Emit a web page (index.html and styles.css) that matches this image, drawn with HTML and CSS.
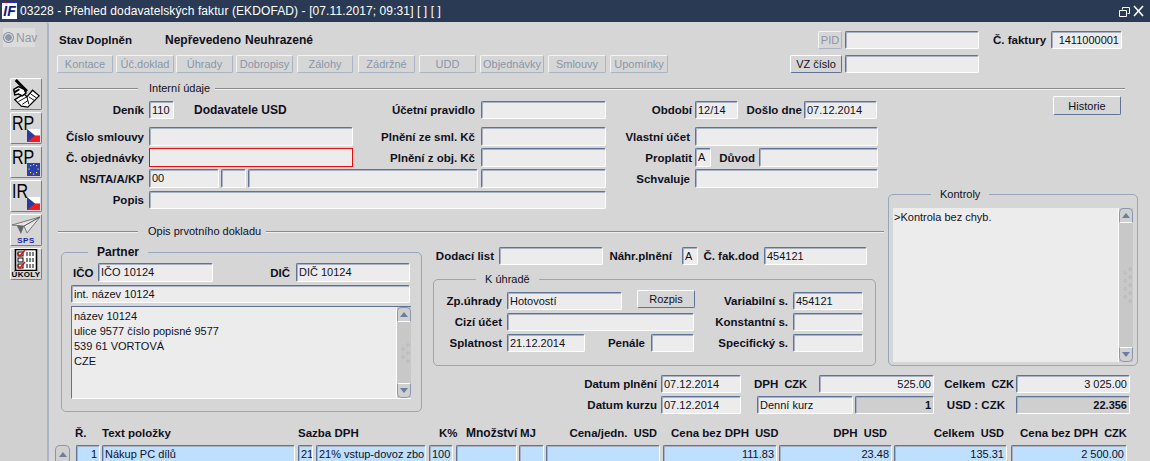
FILE: index.html
```html
<!DOCTYPE html>
<html lang="cs">
<head>
<meta charset="utf-8">
<title>Přehled dodavatelských faktur</title>
<link rel="stylesheet" href="styles.css">
</head>
<body>
<div class="app">
  <header class="titlebar">
    <span class="logo"><span class="logo-i">I</span><span class="logo-f">F</span></span>
    <span class="title">03228 - Přehled dodavatelských faktur (EKDOFAD) - [07.11.2017; 09:31] [ ] [ ]</span>
    <svg class="winctl" width="28" height="14" viewBox="0 0 28 14" fill="none" stroke="#fff">
      <path d="M4.5 3.5h7v6h-2M4.5 3.5v2M1.5 6.5h7v6h-7z"/>
      <path d="M16 2l9 10M25 2l-9 10" stroke-width="1.6"/>
    </svg>
  </header>
  <div class="main">
    <aside class="rail">
      <div class="nav"><span class="radio"></span><span>Nav</span></div>
      <div class="tools">
        <div class="tool">
          <svg viewBox="0 0 32 32" width="30" height="30">
            <path d="M4 22l10-6 3 3 6-7 7 6-12 12-7-1z" fill="#fff" stroke="#000" stroke-width="1.4"/>
            <path d="M8 24l9-5 2 8M12 27l6-4M21 16l6 4M19 19l6 4" fill="none" stroke="#000"/>
            <path d="M5 1l12 12" stroke="#000" stroke-width="3"/>
            <path d="M3 11l5-3 6 3 2 4-4 3-4-2-4 1z" fill="#fff" stroke="#000" stroke-width="1.6"/>
            <path d="M4 14l5-3" stroke="#000" stroke-width="2"/>
          </svg>
        </div>
        <div class="tool">
          <span class="tool-text">RP</span>
          <svg class="flag" viewBox="0 0 13 13" width="13" height="13"><rect width="13" height="6.5" fill="#fff"/><rect y="6.5" width="13" height="6.5" fill="#ee1c25"/><path d="M0 0l8 6.5L0 13z" fill="#2b3a9c"/></svg>
        </div>
        <div class="tool">
          <span class="tool-text">RP</span>
          <svg class="flag" viewBox="0 0 13 13" width="13" height="13"><rect width="13" height="13" fill="#2a3fb0"/><g fill="#ffe000"><rect x="6" y="1" width="1.2" height="1.2"/><rect x="9" y="2" width="1.2" height="1.2"/><rect x="10.5" y="5.5" width="1.2" height="1.2"/><rect x="9" y="9" width="1.2" height="1.2"/><rect x="6" y="10.5" width="1.2" height="1.2"/><rect x="3" y="9" width="1.2" height="1.2"/><rect x="1.5" y="5.5" width="1.2" height="1.2"/><rect x="3" y="2" width="1.2" height="1.2"/></g></svg>
        </div>
        <div class="tool">
          <span class="tool-text">IR</span>
          <svg class="flag" viewBox="0 0 13 13" width="13" height="13"><rect width="13" height="6.5" fill="#fff"/><rect y="6.5" width="13" height="6.5" fill="#ee1c25"/><path d="M0 0l8 6.5L0 13z" fill="#2b3a9c"/></svg>
        </div>
        <div class="tool">
          <svg class="plane" viewBox="0 0 30 20" width="30" height="20">
            <path d="M1 9l28-8-13 16-3-7z" fill="#e6e6e6" stroke="#777"/>
            <path d="M6 10l7 0-3 8z" fill="#666"/>
            <path d="M13 10L29 1" stroke="#555" fill="none"/>
          </svg>
          <span class="sps">SPS</span>
        </div>
        <div class="tool">
          <svg class="tasks" viewBox="0 0 26 22" width="26" height="22">
            <rect x="2.5" y="0.5" width="21" height="21" fill="#fff" stroke="#000" stroke-width="1.6"/>
            <g fill="#fff" stroke="#000"><rect x="5" y="3" width="5" height="4"/><rect x="5" y="9" width="5" height="4"/><rect x="5" y="15" width="5" height="4"/></g>
            <path d="M4 4l3 3 5-6M4 16l3 3 5-6" fill="none" stroke="#e01010" stroke-width="1.5"/>
            <path d="M13 4h8M13 6h8M13 10h8M13 12h8M13 16h8M13 18h8" stroke="#000" stroke-dasharray="2 1"/>
          </svg>
          <span class="ukoly">ÚKOLY</span>
        </div>
      </div>
    </aside>
    <main class="form">
      <div class="row h-18">
        <span class="lbl left ml-2 w-27">Stav</span>
        <span class="lbl left w-79">Doplněn</span>
        <span class="lbl left status w-80">Nepřevedeno</span>
        <span class="lbl left status w-573">Neuhrazené</span>
        <button class="btn off w-24">PID</button>
        <span class="field ml-3 w-134"></span>
        <span class="lbl ml-14 w-53">Č. faktury</span>
        <span class="field ml-5 w-71 end">1411000001</span>
      </div>
      <div class="row h-18 mt-6">
        <button class="btn off w-56">Kontace</button>
        <button class="btn off ml-3 w-58">Úč.doklad</button>
        <button class="btn off ml-2 w-57">Úhrady</button>
        <button class="btn off ml-3 w-57">Dobropisy</button>
        <button class="btn off ml-4 w-56">Zálohy</button>
        <button class="btn off ml-5 w-57">Zádržné</button>
        <button class="btn off ml-4 w-57">UDD</button>
        <button class="btn off ml-4 w-64">Objednávky</button>
        <button class="btn off ml-4 w-58">Smlouvy</button>
        <button class="btn off ml-4 w-58">Upomínky</button>
        <button class="btn ml-122 w-52">VZ číslo</button>
        <span class="field ml-3 w-134"></span>
      </div>
      <div class="sep sep-wide mt-8"><i class="sep-start"></i><span class="sep-text w-66">Interní údaje</span><i class="sep-rest"></i></div>

      <div class="mid">
        <section class="internal">
          <div class="row h-18">
            <span class="lbl w-87">Deník</span>
            <span class="field ml-5 w-25">110</span>
            <span class="lbl left status ml-20 w-100">Dodavatele USD</span>
            <span class="lbl w-181">Účetní pravidlo</span>
            <span class="field ml-6 w-125"></span>
            <span class="lbl w-86">Období</span>
            <span class="field ml-3 w-43">12/14</span>
            <span class="lbl w-64">Došlo dne</span>
            <span class="field ml-2 w-73">07.12.2014</span>
          </div>
          <div class="row h-19 mt-8">
            <span class="lbl w-87">Číslo smlouvy</span>
            <span class="field ml-5 w-204"></span>
            <span class="lbl w-122">Plnění ze sml. Kč</span>
            <span class="field ml-6 w-125"></span>
            <span class="lbl w-84">Vlastní účet</span>
            <span class="field ml-5 w-183"></span>
          </div>
          <div class="row h-19 mt-2">
            <span class="lbl w-87">Č. objednávky</span>
            <span class="field required ml-5 w-204"></span>
            <span class="lbl w-122">Plnění z obj. Kč</span>
            <span class="field ml-6 w-125"></span>
            <span class="lbl w-86">Proplatit</span>
            <span class="field ml-3 w-16">A</span>
            <span class="lbl w-44">Důvod</span>
            <span class="field ml-4 w-119"></span>
          </div>
          <div class="row h-19 mt-2">
            <span class="lbl w-87">NS/TA/A/KP</span>
            <span class="field ml-5 w-70">00</span>
            <span class="field ml-2 w-25"></span>
            <span class="field ml-2 w-230"></span>
            <span class="field ml-3 w-125"></span>
            <span class="lbl w-84">Schvaluje</span>
            <span class="field ml-5 w-183"></span>
          </div>
          <div class="row h-18 mt-3">
            <span class="lbl w-87">Popis</span>
            <span class="field ml-5 w-457"></span>
          </div>
          <div class="sep sep-narrow mt-15"><i class="sep-start"></i><span class="sep-text sep-text-tight w-118">Opis prvotního dokladu</span><i class="sep-rest"></i></div>
        </section>

        <aside class="side">
          <button class="btn history">Historie</button>
          <div class="group checks">
            <span class="legend legend-plain">Kontroly</span>
            <div class="memo checks-memo">
              <div class="memo-text">&gt;Kontrola bez chyb.</div>
              <div class="sb">
                <span class="sb-btn"><i class="arrow-up"></i></span>
                <span class="sb-track"><svg width="9" height="36" viewBox="0 0 9 36" fill="#fff" stroke="#808080" stroke-width=".5"><circle cx="2" cy="6" r="1"/><circle cx="7" cy="2" r="1"/><circle cx="2" cy="14" r="1"/><circle cx="7" cy="10" r="1"/><circle cx="2" cy="22" r="1"/><circle cx="7" cy="18" r="1"/><circle cx="2" cy="30" r="1"/><circle cx="7" cy="26" r="1"/><circle cx="7" cy="34" r="1"/></svg></span>
                <span class="sb-btn"><i class="arrow-down"></i></span>
              </div>
            </div>
          </div>
        </aside>

        <section class="group partner">
          <span class="legend legend-bold">Partner</span>
          <div class="row h-19">
            <span class="lbl left ml-2 w-25">IČO</span>
            <span class="field w-115">IČO 10124</span>
            <span class="lbl w-77">DIČ</span>
            <span class="field ml-6 w-114">DIČ 10124</span>
          </div>
          <div class="row h-18 mt-3"><span class="field w-339">int. název 10124</span></div>
          <div class="memo partner-memo mt-3">
            <div class="memo-text">název 10124<br>ulice 9577 číslo popisné 9577<br>539 61 VORTOVÁ<br>CZE</div>
            <div class="sb">
              <span class="sb-btn"><i class="arrow-up"></i></span>
              <span class="sb-track"><svg width="9" height="20" viewBox="0 0 9 20" fill="#fff" stroke="#808080" stroke-width=".5"><circle cx="2" cy="6" r="1"/><circle cx="7" cy="2" r="1"/><circle cx="2" cy="14" r="1"/><circle cx="7" cy="10" r="1"/><circle cx="7" cy="18" r="1"/></svg></span>
              <span class="sb-btn"><i class="arrow-down"></i></span>
            </div>
          </div>
        </section>

        <section class="payment-area">
          <div class="row h-18 mt-8">
            <span class="lbl w-72">Dodací list</span>
            <span class="field ml-5 w-104"></span>
            <span class="lbl w-69">Náhr.plnění</span>
            <span class="field ml-10 w-16">A</span>
            <span class="lbl w-61">Č. fak.dod</span>
            <span class="field ml-5 w-103">454121</span>
          </div>
          <div class="group payment">
            <span class="legend legend-plain">K úhradě</span>
            <div class="row h-18">
              <span class="lbl w-68">Zp.úhrady</span>
              <span class="field ml-5 w-115">Hotovostí</span>
              <button class="btn ml-15 w-58 raise">Rozpis</button>
              <span class="lbl w-93">Variabilní s.</span>
              <span class="field ml-5 w-70">454121</span>
            </div>
            <div class="row h-18 mt-3">
              <span class="lbl w-68">Cizí účet</span>
              <span class="field ml-5 w-187"></span>
              <span class="lbl w-94">Konstantní s.</span>
              <span class="field ml-5 w-70"></span>
            </div>
            <div class="row h-18 mt-3">
              <span class="lbl w-68">Splatnost</span>
              <span class="field ml-5 w-78">21.12.2014</span>
              <span class="lbl w-60">Penále</span>
              <span class="field ml-6 w-43"></span>
              <span class="lbl w-94">Specifický s.</span>
              <span class="field ml-5 w-70"></span>
            </div>
          </div>
        </section>

        <section class="totals">
          <div class="row h-18">
            <span class="lbl w-235">Datum plnění</span>
            <span class="field ml-4 w-80">07.12.2014</span>
            <span class="lbl w-66">DPH <span class="unit">CZK</span></span>
            <span class="field ml-12 w-115 end">525.00</span>
            <span class="lbl w-80">Celkem <span class="unit">CZK</span></span>
            <span class="field ml-2 w-114 end">3 025.00</span>
          </div>
          <div class="row h-18 mt-3">
            <span class="lbl w-235">Datum kurzu</span>
            <span class="field ml-4 w-80">07.12.2014</span>
            <span class="field ml-16 w-96">Denní kurz</span>
            <span class="field ml-2 w-79 end dim strong">1</span>
            <span class="lbl w-71">USD : CZK</span>
            <span class="field ml-11 w-114 end dim strong">22.356</span>
          </div>
        </section>
      </div>

      <section class="items">
        <div class="row h-14">
          <span class="lbl left ml-20 w-27">Ř.</span>
          <span class="lbl left w-196">Text položky</span>
          <span class="lbl left w-141">Sazba DPH</span>
          <span class="lbl left w-27">K%</span>
          <span class="lbl left status w-54">Množství</span>
          <span class="lbl left w-40">MJ</span>
          <span class="lbl w-97">Cena/jedn. <span class="unit">USD</span></span>
          <span class="lbl left ml-14 w-101">Cena bez DPH <span class="unit">USD</span></span>
          <span class="lbl w-115">DPH <span class="unit">USD</span></span>
          <span class="lbl w-117">Celkem <span class="unit">USD</span></span>
          <span class="lbl left ml-16 w-102">Cena bez DPH <span class="unit">CZK</span></span>
        </div>
        <div class="row h-19 mt-5">
          <span class="sb-btn round w-15"><i class="arrow-up"></i></span>
          <span class="field sel ml-6 w-24 end">1</span>
          <span class="field sel ml-2 w-193">Nákup PC dílů</span>
          <span class="field sel ml-3 w-15">21</span>
          <span class="field sel ml-3 w-110">21% vstup-dovoz zbo</span>
          <span class="field sel ml-3 w-24">100</span>
          <span class="field sel ml-3 w-61"></span>
          <span class="field sel ml-2 w-25"></span>
          <span class="field sel ml-2 w-114"></span>
          <span class="field sel ml-3 w-114 end">111.83</span>
          <span class="field sel ml-2 w-113 end">23.48</span>
          <span class="field sel ml-2 w-113 end">135.31</span>
          <span class="field sel ml-4 w-116 end">2 500.00</span>
        </div>
      </section>
    </main>
  </div>
</div>
</body>
</html>
```
FILE: styles.css
```css
* { box-sizing: border-box; }
html, body { margin: 0; padding: 0; height: 461px; overflow: hidden; }
body { background: #d6d6d6; color: #10101c; font: 11px/1 "Liberation Sans", Arial, sans-serif; }
.app { width: 1150px; height: 461px; display: flex; flex-direction: column; overflow: hidden; }

/* title bar */
.titlebar { flex: none; height: 22px; background: #2a3a55; color: #fff; display: flex; align-items: center; padding: 0 4px 0 1px; }
.logo { width: 17px; height: 18px; background: #fff; border: 1px solid #1a2fd0; display: flex; align-items: center; justify-content: center; font: italic bold 14px "Liberation Sans", sans-serif; }
.logo-i { color: #101a80; text-decoration: overline #c01020; }
.logo-f { color: #101a80; }
.title { margin-left: 2px; font-size: 12px; letter-spacing: .1px; flex: 1; white-space: nowrap; }
.winctl { flex: none; }

/* left rail */
.main { flex: 1; display: flex; min-height: 0; }
.rail { flex: none; width: 49px; background: #d0d0d0; border-right: 2px solid #aab4c6; border-top-right-radius: 3px; padding: 6px 0 0 3px; }
.nav { width: 32px; height: 19px; background: #dcdcdc; display: flex; align-items: center; gap: 3px; color: #8d99aa; font-size: 12px; }
.radio { width: 9px; height: 9px; border-radius: 50%; background: #8f98a6; border: 1px solid #e8e8e8; box-shadow: 0 0 0 1px #8794a8; margin-left: 1px; flex: none; }
.tools { margin: 31px 0 0 7px; display: flex; flex-direction: column; gap: 2px; }
.tool { position: relative; width: 32px; height: 32px; background: #d6d6d6; border: 1px solid; border-color: #fff #6b7f9f #6b7f9f #fff; border-radius: 2px; display: flex; flex-direction: column; align-items: center; overflow: hidden; }
.tool-text { align-self: flex-start; margin: 1px 0 0 1px; font: 20px/19px "Liberation Sans", sans-serif; color: #000; transform: scaleX(.8); transform-origin: left top; }
.flag { position: absolute; right: 1px; bottom: 1px; }
.plane { margin-top: 1px; flex: none; }
.sps { font: bold 8px/9px "Liberation Sans", sans-serif; color: #1a2aa0; letter-spacing: .5px; }
.tasks { flex: none; margin-top: 0; }
.ukoly { font: bold 8px/8px "Liberation Sans", sans-serif; color: #000; letter-spacing: .3px; }

/* form */
.form { flex: 1; padding: 9px 0 0 8px; min-width: 0; }
.row { display: flex; align-items: center; flex: none; }
.lbl { flex: none; font-size: 11.5px; font-weight: bold; text-align: right; white-space: nowrap; line-height: 14px; }
.left { text-align: left; }
.status { font-size: 12px; }
.unit { margin-left: 3px; font-size: 11px; }
.field { flex: none; display: block; height: 100%; background: #ececec; border: 1px solid; border-color: #5f7396 #fff #fff #5f7396; border-radius: 2px; box-shadow: inset 1px 1px 0 #a8b2c4; padding: 0 2px; line-height: 16px; white-space: nowrap; overflow: hidden; }
.end { text-align: right; }
.dim { background: #cfcfcf; }
.strong { font-weight: bold; }
.sel { background: #bfdfff; }
.required { border: 1px solid #e01010; box-shadow: none; border-radius: 0; }
.btn { flex: none; height: 100%; padding: 0; background: #d6d6d6; border: 1px solid; border-color: #fff #5f7396 #5f7396 #fff; border-radius: 2px; color: #10101c; font: 11px/14px "Liberation Sans", Arial, sans-serif; }
.off { color: #8a96a8; border-color: #f4f4f4 #aab3c2 #aab3c2 #f4f4f4; }
.raise { height: 18px; margin-top: -4px; }

/* separators */
.sep { display: flex; align-items: center; height: 15px; margin-left: 1px; }
.sep-wide { width: 1067px; }
.sep-narrow { width: 826px; }
.sep-start { flex: none; width: 80px; height: 2px; background: linear-gradient(#8a8a8a 50%, #f0f0f0 50%); }
.sep-rest { flex: 1; height: 2px; background: linear-gradient(#8a8a8a 50%, #f0f0f0 50%); }
.sep-text { flex: none; margin-left: 11px; white-space: nowrap; }
.sep-text-tight { margin-left: 10px; }

/* groups */
.mid { display: grid; grid-template-columns: 365px 466px 250px; grid-template-rows: 143px 127px 48px; }
.internal { grid-column: 1 / 3; grid-row: 1; padding-top: 5px; }
.side { grid-column: 3; grid-row: 1 / 3; display: flex; flex-direction: column; }
.partner { grid-column: 1; grid-row: 2 / 4; margin: 13px 0 2px 4px; padding: 10px 0 0 9px; }
.payment-area { grid-column: 2; grid-row: 2; }
.totals { grid-column: 2 / 4; grid-row: 3; padding-top: 9px; }
.group { position: relative; border: 1px solid #98a6bc; border-radius: 5px; }
.legend { position: absolute; top: -8px; left: 42px; padding: 0 9px; background: #d6d6d6; line-height: 14px; white-space: nowrap; }
.legend-bold { left: 26px; font-size: 12px; font-weight: bold; }
.history { align-self: flex-start; width: 68px; height: 19px; margin-left: 165px; }
.checks { margin-top: 79px; height: 172px; padding: 13px 0 0 4px; }
.payment { margin: 14px 0 0 11px; width: 443px; height: 87px; padding-top: 12px; }

/* memo + scrollbar */
.memo { display: flex; background: #ececec; }
.memo-text { flex: 1; padding: 2px; line-height: 15px; white-space: nowrap; overflow: hidden; }
.checks-memo { width: 240px; height: 154px; }
.checks-memo .memo-text { padding: 2px 1px; }
.partner-memo { width: 340px; height: 93px; border-top: 1px solid #5f7396; border-left: 1px solid #5f7396; border-bottom: 1px solid #fff; }
.sb { flex: none; width: 15px; display: flex; flex-direction: column; background: #c8c8c8; border-left: 1px solid #fff; }
.sb-btn { flex: none; height: 15px; display: flex; align-items: center; justify-content: center; background: #d0d0d0; border: 1px solid; border-color: #8797b0 #8797b0 #fff; border-radius: 5px 5px 0 0; }
.sb-btn:last-child { border-color: #fff #8797b0 #8797b0; border-radius: 0 0 5px 5px; }
.sb-track { flex: 1; display: flex; align-items: center; justify-content: flex-end; padding-right: 1px; }
.arrow-up { width: 0; height: 0; border: 4px solid transparent; border-top: 0; border-bottom: 5px solid #6b7f9f; }
.arrow-down { width: 0; height: 0; border: 4px solid transparent; border-bottom: 0; border-top: 5px solid #6b7f9f; }
.round { height: 19px; align-self: flex-start; }

/* items */
.items { margin: 12px 0 0 -2px; }

/* sizes */
.h-14 { height: 14px; } .h-18 { height: 18px; } .h-19 { height: 19px; }
.mt-2 { margin-top: 2px; } .mt-3 { margin-top: 3px; } .mt-5 { margin-top: 5px; } .mt-6 { margin-top: 6px; } .mt-8 { margin-top: 8px; } .mt-15 { margin-top: 15px; }
.ml-2 { margin-left: 2px; } .ml-3 { margin-left: 3px; } .ml-4 { margin-left: 4px; } .ml-5 { margin-left: 5px; } .ml-6 { margin-left: 6px; } .ml-10 { margin-left: 10px; } .ml-11 { margin-left: 11px; } .ml-12 { margin-left: 12px; } .ml-14 { margin-left: 14px; } .ml-15 { margin-left: 15px; } .ml-16 { margin-left: 16px; } .ml-20 { margin-left: 20px; } .ml-122 { margin-left: 122px; }
.w-15 { width: 15px; } .w-16 { width: 16px; } .w-24 { width: 24px; } .w-25 { width: 25px; } .w-27 { width: 27px; } .w-40 { width: 40px; } .w-43 { width: 43px; } .w-44 { width: 44px; } .w-52 { width: 52px; } .w-53 { width: 53px; } .w-54 { width: 54px; } .w-56 { width: 56px; } .w-57 { width: 57px; } .w-58 { width: 58px; } .w-60 { width: 60px; } .w-61 { width: 61px; } .w-64 { width: 64px; } .w-66 { width: 66px; } .w-68 { width: 68px; } .w-69 { width: 69px; } .w-70 { width: 70px; } .w-71 { width: 71px; } .w-72 { width: 72px; } .w-73 { width: 73px; } .w-77 { width: 77px; } .w-78 { width: 78px; } .w-79 { width: 79px; } .w-80 { width: 80px; } .w-84 { width: 84px; } .w-86 { width: 86px; } .w-87 { width: 87px; } .w-93 { width: 93px; } .w-94 { width: 94px; } .w-96 { width: 96px; } .w-97 { width: 97px; } .w-100 { width: 100px; } .w-101 { width: 101px; } .w-102 { width: 102px; } .w-103 { width: 103px; } .w-104 { width: 104px; } .w-110 { width: 110px; } .w-113 { width: 113px; } .w-114 { width: 114px; } .w-115 { width: 115px; } .w-116 { width: 116px; } .w-117 { width: 117px; } .w-118 { width: 118px; } .w-119 { width: 119px; } .w-122 { width: 122px; } .w-125 { width: 125px; } .w-134 { width: 134px; } .w-141 { width: 141px; } .w-181 { width: 181px; } .w-183 { width: 183px; } .w-187 { width: 187px; } .w-193 { width: 193px; } .w-196 { width: 196px; } .w-204 { width: 204px; } .w-230 { width: 230px; } .w-235 { width: 235px; } .w-339 { width: 339px; } .w-457 { width: 457px; } .w-573 { width: 573px; }
```
